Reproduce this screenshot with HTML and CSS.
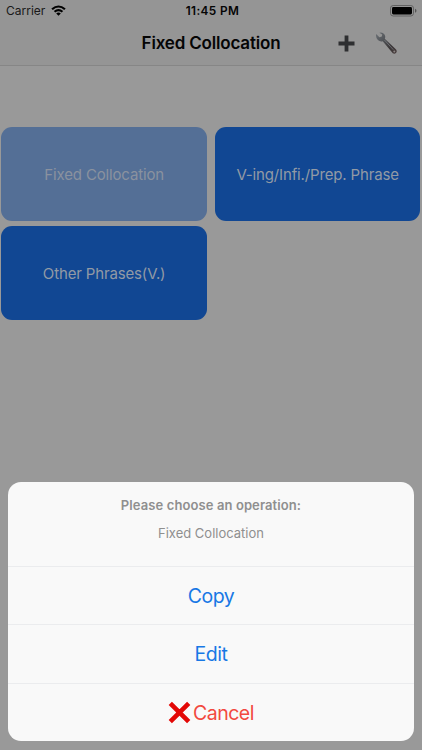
FILE: index.html
```html
<!DOCTYPE html>
<html lang="en">
<head>
<meta charset="utf-8">
<title>Fixed Collocation</title>
<link rel="stylesheet" href="styles.css">
</head>
<body>
<div class="screen">
  <header class="top">
    <div class="status">
      <div class="carrier"><span>Carrier</span>
        <svg class="wifi" width="15" height="11" viewBox="0 0 15 11"><path d="M.3 3.5Q7.5-2.7 14.7 3.5L13.2 5Q7.5.2 1.8 5ZM2.8 6Q7.5 2 12.2 6L10.7 7.5Q7.5 4.9 4.3 7.5ZM5.2 8.4Q7.5 6.6 9.8 8.4L7.5 10.7Z"/></svg>
      </div>
      <div class="clock">11:45 PM</div>
      <svg class="battery" width="27" height="12" viewBox="0 0 27 12"><rect x=".5" y=".5" width="23" height="10.5" rx="2.7" fill="none" stroke="#555" stroke-width=".8"/><rect x="2" y="2" width="20" height="7.5" rx="1.4"/><path d="M25 3.8Q26.5 4.2 26.5 5.8T25 7.8Z" fill="#555"/></svg>
    </div>
    <nav class="nav">
      <h1>Fixed Collocation</h1>
      <div class="tools">
        <svg width="17" height="17" viewBox="0 0 17 17"><path d="M6.6.5h3.8v6.1h6.1v3.8h-6.1v6.1H6.6v-6.1H.5V6.6h6.1Z" fill="#2e2f31"/></svg>
        <svg class="wrench" width="23" height="23" viewBox="0 0 23 23">
          <defs><linearGradient id="metal" x1="0" y1="0" x2="1" y2="1"><stop offset="0" stop-color="#6b7075"/><stop offset=".35" stop-color="#525559"/><stop offset=".7" stop-color="#3a3637"/><stop offset="1" stop-color="#493b3b"/></linearGradient></defs>
          <path d="M1.2 2.1 4.4 5.2 6.8 4.6 7.2 2.5 4.3.8Q7.6-.1 9.5 2.4 10.8 4.4 9.8 6.8L20.6 17.1Q22.2 18.6 21.5 20.3 20.3 22.6 17.8 21.3L7.7 9.2Q4.9 9.9 2.9 8 .4 5.6 1.2 2.1Z" fill="url(#metal)"/>
          <path d="M9.5 8.1 18.3 17.7" stroke="#777b80" stroke-width=".8"/><circle cx="19.3" cy="19.4" r="1" fill="#8b8584"/>
        </svg>
      </div>
    </nav>
  </header>
  <main class="grid">
    <button class="card muted">Fixed Collocation</button>
    <button class="card">V-ing/Infi./Prep. Phrase</button>
    <button class="card">Other Phrases(V.)</button>
  </main>
  <section class="sheet">
    <div class="message"><h2>Please choose an operation:</h2><p>Fixed Collocation</p></div>
    <button class="action">Copy</button>
    <button class="action">Edit</button>
    <button class="action cancel"><svg width="23" height="23" viewBox="0 0 23 23"><path d="M2.3 2.3 20.7 20.7M20.7 2.3 2.3 20.7" stroke="#e30806" stroke-width="4.6"/></svg><span>Cancel</span></button>
  </section>
</div>
</body>
</html>
```
FILE: styles.css
```css
* { box-sizing: border-box; }
body { margin: 0; font-family: Inter, sans-serif; color: #050505; }
.screen { width: 422px; height: 750px; background: #999; display: flex; flex-direction: column; overflow: hidden; }
.top { height: 66px; background: #959595; border-bottom: 1px solid #868686; }
.status { height: 22px; padding: 0 5px 0 6px; display: grid; grid-template-columns: 1fr auto 1fr; align-items: center; }
.carrier { display: flex; align-items: center; gap: 6px; font-size: 12px; line-height: 14px; color: #191919; }
.wifi { margin-top: -1px; }
.clock { font-size: 11.8px; font-weight: 600; letter-spacing: .4px; margin-left: 2px; }
.battery { justify-self: end; }
.nav { height: 43px; display: grid; grid-template-columns: 1fr auto 1fr; align-items: center; }
h1 { grid-column: 2; margin: -2px 0 0; font-size: 17px; line-height: 20px; font-weight: 600; letter-spacing: -.18px; white-space: nowrap; }
.tools { display: flex; align-items: center; gap: 20px; justify-self: end; padding-right: 24px; }
.wrench { margin-top: -1px; }
button { border: 0; margin: 0; padding: 0; font-family: inherit; }
.grid { display: grid; grid-template-columns: 205.7px 205.7px; grid-auto-rows: 93.7px; gap: 5.3px 7.8px; padding: 61.3px 1.3px 0; }
.card { border-radius: 11px; background: #114793; color: #929aa5; font-size: 15px; letter-spacing: -.15px; white-space: nowrap; }
.muted { background: #546f96; color: #8a929f; }
.sheet { margin: auto 8.4px 8.6px; height: 259.4px; flex: none; border-radius: 13px; background: #f9f9f9; overflow: hidden; display: flex; flex-direction: column; }
.message { height: 84px; padding-top: 14px; text-align: center; color: #8f8f8f; }
h2 { margin: 0; font-size: 13px; line-height: 18px; font-weight: 600; letter-spacing: .1px; }
p { margin: 10px 0 0; font-size: 13px; line-height: 18px; }
.action { height: 58.4px; border-top: 1px solid #ebecee; background: transparent; color: #1878e5; font-size: 19.5px; letter-spacing: -.5px; display: flex; align-items: center; justify-content: center; }
.cancel { color: #f2493f; gap: 2px; padding-top: 1px; }
```
